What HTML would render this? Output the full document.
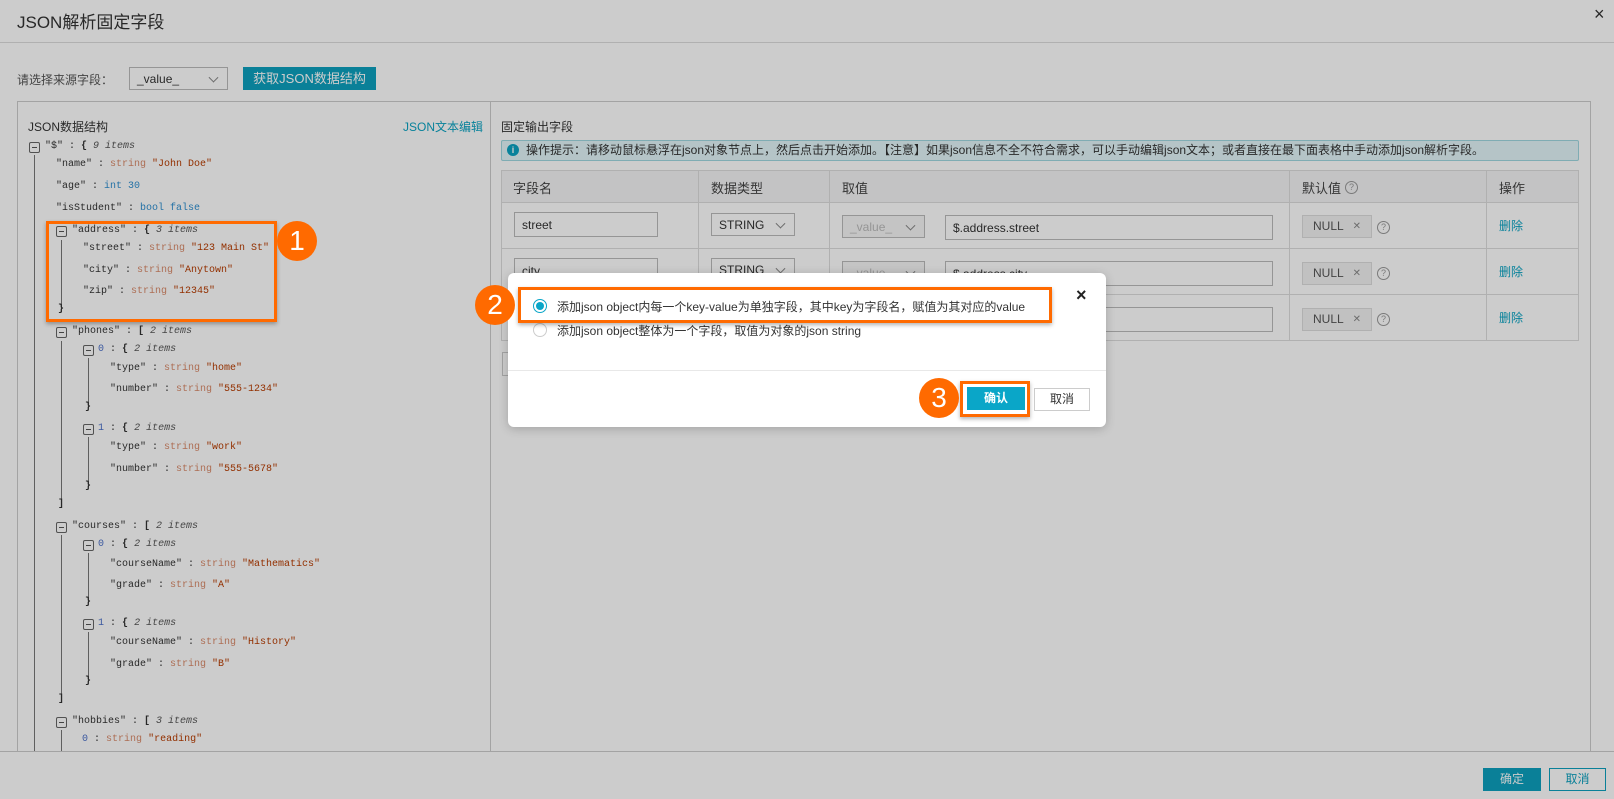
<!DOCTYPE html>
<html><head><meta charset="utf-8">
<style>
*{box-sizing:border-box;margin:0;padding:0}
body{width:1614px;height:799px;overflow:hidden;background:#fff;font-family:"Liberation Sans","Noto Sans CJK SC",sans-serif;font-size:12px;color:#333;position:relative}
.a{position:absolute}
.tr{position:absolute;font-family:"Liberation Mono","Noto Sans CJK SC",monospace;font-size:10px;line-height:14px;white-space:nowrap;color:#333;transform:translateY(-7px)}
.t{color:#d98a6a}.s{color:#b83c00}.n{color:#2f8fd0}.i{font-style:italic;color:#555}.ix{color:#4a6fc8}
.tg{position:absolute;width:11px;height:11px;border:1px solid #666;border-radius:2px;transform:translateY(-5px)}
.tg:after{content:"";position:absolute;left:2px;right:2px;top:4px;height:1px;background:#555}
.vl{position:absolute;width:1px;background:#777}
.inp{position:absolute;border:1px solid #bbb;background:#fff;padding-left:7px;font-size:12px;display:flex;align-items:center;color:#333}
.sel:after{content:"";position:absolute;right:10px;top:50%;width:6px;height:6px;border-right:1.5px solid #888;border-bottom:1.5px solid #888;transform:translateY(-70%) rotate(45deg)}
.q{position:absolute;width:13px;height:13px;border:1px solid #999;border-radius:50%;font-size:9px;color:#999;text-align:center;line-height:11px}
.del{position:absolute;color:#0aa3c2;font-size:12px}
.null{position:absolute;width:70px;height:23px;background:#f2f2f2;border:1px solid #ddd;font-size:12px;color:#555;padding-left:10px;line-height:21px}
.null span{position:absolute;right:10px;color:#888;font-size:10px}
.ov{position:absolute;left:0;top:0;width:1614px;height:799px;background:rgba(0,0,0,.2)}
.circ{position:absolute;width:40px;height:40px;border-radius:50%;background:#ff6a00;color:#fff;font-size:28px;text-align:center;line-height:40px;font-family:"Liberation Sans",sans-serif}
.ob{position:absolute;border:3px solid #ff6a00;box-shadow:0 2px 4px rgba(0,0,0,.3)}
</style></head><body>
<div class="a" style="left:17px;top:8px;font-size:17px;color:#333">JSON解析固定字段</div>
<div class="a" style="left:1594px;top:4px;font-size:18px;color:#333">×</div>
<div class="a" style="left:0;top:42px;width:1614px;height:1px;background:#ddd"></div>
<div class="a" style="left:17px;top:71px;font-size:12px;color:#555">请选择来源字段：</div>
<div class="inp sel" style="left:129px;top:67px;width:99px;height:23px">_value_</div>
<div class="a" style="left:243px;top:67px;width:133px;height:23px;background:#0da1bf;color:#fff;font-size:13px;text-align:center;line-height:23px">获取JSON数据结构</div>
<div class="a" style="left:17px;top:101px;width:1574px;height:651px;border:1px solid #ccc"></div>
<div class="a" style="left:490px;top:101px;width:1px;height:651px;background:#ccc"></div>
<div class="a" style="left:0;top:751px;width:1614px;height:1px;background:#ccc"></div>
<div class="a" style="left:28px;top:118px;font-size:12px;color:#333">JSON数据结构</div>
<div class="a" style="left:403px;top:118px;font-size:12px;color:#0aa3c2">JSON文本编辑</div>
<div class="vl" style="left:34px;top:155px;height:596px"></div>
<div class="vl" style="left:61px;top:240px;height:72px"></div>
<div class="vl" style="left:61px;top:341px;height:164px"></div>
<div class="vl" style="left:61px;top:535px;height:165px"></div>
<div class="vl" style="left:61px;top:730px;height:21px"></div>
<div class="vl" style="left:88px;top:358px;height:50px"></div>
<div class="vl" style="left:88px;top:437px;height:50px"></div>
<div class="vl" style="left:88px;top:553px;height:50px"></div>
<div class="vl" style="left:88px;top:632px;height:50px"></div>
<div class="tg" style="left:29px;top:147px"></div><div class="tr" style="left:45px;top:147px">"$" : <b>{</b> <span class="i">9 items</span></div>
<div class="tr" style="left:56px;top:165px">"name" : <span class="t">string</span> <span class="s">"John Doe"</span></div>
<div class="tr" style="left:56px;top:187px">"age" : <span class="n">int 30</span></div>
<div class="tr" style="left:56px;top:209px">"isStudent" : <span class="n">bool false</span></div>
<div class="tg" style="left:56px;top:231px"></div><div class="tr" style="left:72px;top:231px">"address" : <b>{</b> <span class="i">3 items</span></div>
<div class="tr" style="left:83px;top:249px">"street" : <span class="t">string</span> <span class="s">"123 Main St"</span></div>
<div class="tr" style="left:83px;top:271px">"city" : <span class="t">string</span> <span class="s">"Anytown"</span></div>
<div class="tr" style="left:83px;top:292px">"zip" : <span class="t">string</span> <span class="s">"12345"</span></div>
<div class="tr" style="left:58px;top:310px"><b>}</b></div>
<div class="tg" style="left:56px;top:332px"></div><div class="tr" style="left:72px;top:332px">"phones" : <b>[</b> <span class="i">2 items</span></div>
<div class="tg" style="left:83px;top:350px"></div><div class="tr" style="left:98px;top:350px"><span class="ix">0</span> : <b>{</b> <span class="i">2 items</span></div>
<div class="tr" style="left:110px;top:369px">"type" : <span class="t">string</span> <span class="s">"home"</span></div>
<div class="tr" style="left:110px;top:390px">"number" : <span class="t">string</span> <span class="s">"555-1234"</span></div>
<div class="tr" style="left:85px;top:408px"><b>}</b></div>
<div class="tg" style="left:83px;top:429px"></div><div class="tr" style="left:98px;top:429px"><span class="ix">1</span> : <b>{</b> <span class="i">2 items</span></div>
<div class="tr" style="left:110px;top:448px">"type" : <span class="t">string</span> <span class="s">"work"</span></div>
<div class="tr" style="left:110px;top:470px">"number" : <span class="t">string</span> <span class="s">"555-5678"</span></div>
<div class="tr" style="left:85px;top:487px"><b>}</b></div>
<div class="tr" style="left:58px;top:505px"><b>]</b></div>
<div class="tg" style="left:56px;top:527px"></div><div class="tr" style="left:72px;top:527px">"courses" : <b>[</b> <span class="i">2 items</span></div>
<div class="tg" style="left:83px;top:545px"></div><div class="tr" style="left:98px;top:545px"><span class="ix">0</span> : <b>{</b> <span class="i">2 items</span></div>
<div class="tr" style="left:110px;top:565px">"courseName" : <span class="t">string</span> <span class="s">"Mathematics"</span></div>
<div class="tr" style="left:110px;top:586px">"grade" : <span class="t">string</span> <span class="s">"A"</span></div>
<div class="tr" style="left:85px;top:603px"><b>}</b></div>
<div class="tg" style="left:83px;top:624px"></div><div class="tr" style="left:98px;top:624px"><span class="ix">1</span> : <b>{</b> <span class="i">2 items</span></div>
<div class="tr" style="left:110px;top:643px">"courseName" : <span class="t">string</span> <span class="s">"History"</span></div>
<div class="tr" style="left:110px;top:665px">"grade" : <span class="t">string</span> <span class="s">"B"</span></div>
<div class="tr" style="left:85px;top:682px"><b>}</b></div>
<div class="tr" style="left:58px;top:700px"><b>]</b></div>
<div class="tg" style="left:56px;top:722px"></div><div class="tr" style="left:72px;top:722px">"hobbies" : <b>[</b> <span class="i">3 items</span></div>
<div class="tr" style="left:82px;top:740px"><span class="ix">0</span> : <span class="t">string</span> <span class="s">"reading"</span></div>
<div class="a" style="left:501px;top:118px;font-size:12px;color:#333">固定输出字段</div>
<div class="a" style="left:501px;top:140px;width:1078px;height:21px;background:#e3f6f9;border:1px solid #9fd8e0;border-radius:2px;font-size:12px;line-height:19px;padding-left:24px;color:#333;white-space:nowrap;overflow:hidden">操作提示：请移动鼠标悬浮在json对象节点上，然后点击开始添加。【注意】如果json信息不全不符合需求，可以手动编辑json文本；或者直接在最下面表格中手动添加json解析字段。</div>
<div class="a" style="left:507px;top:144px;width:12px;height:12px;border-radius:50%;background:#0aa3c2;color:#fff;font-size:9px;font-weight:bold;text-align:center;line-height:12px">i</div>
<div class="a" style="left:501px;top:170px;width:1078px;height:171px;border:1px solid #ddd"></div>
<div class="a" style="left:502px;top:171px;width:1076px;height:31px;background:#f4f4f6"></div>
<div class="a" style="left:501px;top:202px;width:1078px;height:1px;background:#ddd"></div>
<div class="a" style="left:501px;top:248px;width:1078px;height:1px;background:#ddd"></div>
<div class="a" style="left:501px;top:294px;width:1078px;height:1px;background:#ddd"></div>
<div class="a" style="left:698px;top:170px;width:1px;height:171px;background:#ddd"></div>
<div class="a" style="left:829px;top:170px;width:1px;height:171px;background:#ddd"></div>
<div class="a" style="left:1289px;top:170px;width:1px;height:171px;background:#ddd"></div>
<div class="a" style="left:1486px;top:170px;width:1px;height:171px;background:#ddd"></div>
<div class="a" style="left:513px;top:178px;font-size:13px;color:#444">字段名</div>
<div class="a" style="left:711px;top:178px;font-size:13px;color:#444">数据类型</div>
<div class="a" style="left:842px;top:178px;font-size:13px;color:#444">取值</div>
<div class="a" style="left:1302px;top:178px;font-size:13px;color:#444">默认值</div><div class="q" style="left:1345px;top:181px">?</div>
<div class="a" style="left:1499px;top:178px;font-size:13px;color:#444">操作</div>
<div class="inp" style="left:514px;top:212px;width:144px;height:25px">street</div>
<div class="inp sel" style="left:711px;top:213px;width:84px;height:23px">STRING</div>
<div class="inp sel" style="left:842px;top:215px;width:83px;height:23px;background:#f5f5f5;color:#bbb">_value_</div>
<div class="inp" style="left:945px;top:215px;width:328px;height:25px">$.address.street</div>
<div class="null" style="left:1302px;top:215px">NULL<span>✕</span></div><div class="q" style="left:1377px;top:221px">?</div>
<div class="del" style="left:1499px;top:217px">删除</div>
<div class="inp" style="left:514px;top:258px;width:144px;height:25px">city</div>
<div class="inp sel" style="left:711px;top:258px;width:84px;height:23px">STRING</div>
<div class="inp sel" style="left:842px;top:261px;width:83px;height:23px;background:#f5f5f5;color:#bbb">_value_</div>
<div class="inp" style="left:945px;top:261px;width:328px;height:25px">$.address.city</div>
<div class="null" style="left:1302px;top:262px">NULL<span>✕</span></div><div class="q" style="left:1377px;top:267px">?</div>
<div class="del" style="left:1499px;top:263px">删除</div>
<div class="inp" style="left:514px;top:304px;width:144px;height:25px">zip</div>
<div class="inp sel" style="left:711px;top:304px;width:84px;height:23px">STRING</div>
<div class="inp sel" style="left:842px;top:307px;width:83px;height:23px;background:#f5f5f5;color:#bbb">_value_</div>
<div class="inp" style="left:945px;top:307px;width:328px;height:25px">$.address.zip</div>
<div class="null" style="left:1302px;top:308px">NULL<span>✕</span></div><div class="q" style="left:1377px;top:313px">?</div>
<div class="del" style="left:1499px;top:309px">删除</div>
<div class="a" style="left:502px;top:352px;width:60px;height:24px;border:1px solid #ccc;background:#fff"></div>
<div class="a" style="left:1483px;top:768px;width:58px;height:23px;background:#0da1bf;color:#fff;font-size:12px;text-align:center;line-height:23px">确定</div>
<div class="a" style="left:1549px;top:768px;width:57px;height:23px;border:1px solid #0da1bf;color:#0da1bf;font-size:12px;text-align:center;line-height:21px;background:#fff">取消</div>
<div class="ov"></div>
<div class="a" style="left:508px;top:273px;width:598px;height:154px;background:#fff;border-radius:6px;box-shadow:0 2px 10px rgba(0,0,0,.2)"></div>
<div class="a" style="left:508px;top:370px;width:598px;height:1px;background:#e8e8e8"></div>
<div class="a" style="left:533px;top:299px;width:14px;height:14px;border-radius:50%;border:1px solid #0aa6c8"></div>
<div class="a" style="left:536px;top:302px;width:8px;height:8px;border-radius:50%;background:#0aa6c8"></div>
<div class="a" style="left:557px;top:298px;font-size:12px;color:#333;white-space:nowrap">添加json object内每一个key-value为单独字段，其中key为字段名，赋值为其对应的value</div>
<div class="a" style="left:533px;top:323px;width:14px;height:14px;border-radius:50%;border:1px solid #ccc"></div>
<div class="a" style="left:557px;top:322px;font-size:12px;color:#333;white-space:nowrap">添加json object整体为一个字段，取值为对象的json string</div>
<div class="a" style="left:1076px;top:285px;font-size:18px;color:#222;font-weight:bold">×</div>
<div class="a" style="left:967px;top:387px;width:58px;height:23px;background:#0aa6c8;color:#fff;font-size:12px;text-align:center;line-height:23px;font-weight:bold">确认</div>
<div class="a" style="left:1034px;top:388px;width:56px;height:23px;border:1px solid #ccc;color:#333;font-size:12px;text-align:center;line-height:21px">取消</div>
<div class="ob" style="left:46px;top:221px;width:231px;height:101px"></div>
<div class="circ" style="left:277px;top:221px">1</div>
<div class="ob" style="left:518px;top:287px;width:534px;height:36px"></div>
<div class="circ" style="left:475px;top:285px">2</div>
<div class="ob" style="left:960px;top:381px;width:70px;height:36px"></div>
<div class="circ" style="left:919px;top:378px">3</div>
</body></html>
